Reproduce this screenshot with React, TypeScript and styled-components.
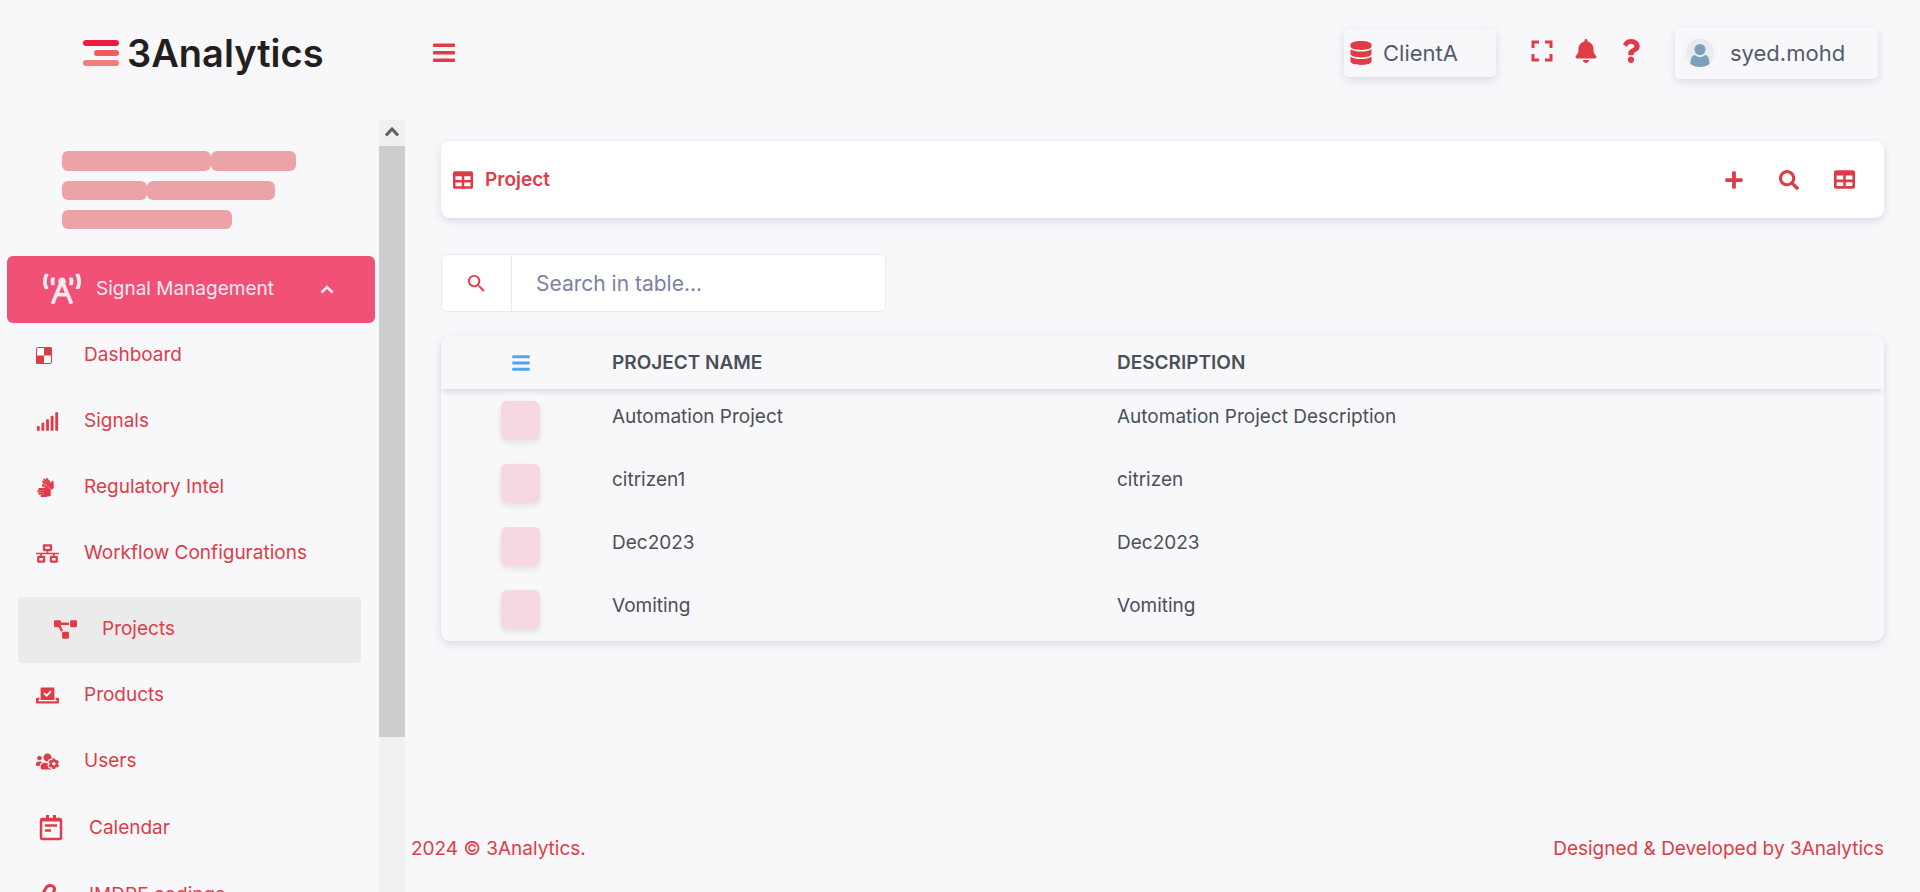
import React from 'react';
import styled, { createGlobalStyle } from 'styled-components';
import {
  FaBars, FaBell, FaBroadcastTower, FaDatabase, FaNetworkWired, FaPlus, FaProjectDiagram,
  FaQuestion, FaSearch, FaSignal, FaSignLanguage, FaTable, FaUsersCog, FaVoteYea,
} from 'react-icons/fa';
import { MdSearch } from 'react-icons/md';

const red = '#df3c47';
const shadow = '0 3px 8px rgba(30, 32, 70, 0.14)';

const GlobalStyle = createGlobalStyle`
  *, *::before, *::after { box-sizing: border-box; }
  body {
    margin: 0;
    background: #f8f8fb;
    color: #495057;
    font-family: Inter, Roboto, sans-serif;
    font-size: 19px;
    line-height: 28px;
    overflow: hidden;
  }
  button, input { font: inherit; color: inherit; }
  button { border: 0; background: none; padding: 0; cursor: pointer; }
  a { color: inherit; text-decoration: none; }
  svg { display: block; flex: none; }
`;

const Page = styled.div`
  display: flex;
  flex-direction: column;
  height: 100vh;
`;

const Header = styled.header`
  display: flex;
  align-items: center;
  flex: none;
  height: 106px;
  margin-bottom: 14px;
  padding: 0 42px 0 82px;
`;

const Brand = styled.a`
  display: flex;
  align-items: center;
  gap: 8px;
  width: 351px;
  color: #231f20;
  font-size: 38px;
  font-weight: 600;
  line-height: 48px;
`;

const IconButton = styled.button`
  display: flex;
  align-items: center;
  justify-content: center;
  color: ${red};
`;

const HeaderTools = styled.div`
  display: flex;
  align-items: center;
  margin-left: auto;
`;

const HeaderIcons = styled.div`
  display: flex;
  align-items: center;
  gap: 21px;
  padding: 0 32px 4px 35px;
`;

const HeaderChip = styled.button<{ $width: number; $height: number; $gap: number }>`
  display: flex;
  align-items: center;
  gap: ${(p) => p.$gap}px;
  width: ${(p) => p.$width}px;
  height: ${(p) => p.$height}px;
  padding: 0 5px;
  border-radius: 5px;
  background: #f8f8fb;
  box-shadow: ${shadow};
  color: #555b6d;
  font-size: 22px;
  svg { color: ${red}; }
`;

const Body = styled.div`
  display: flex;
  flex: 1;
  min-height: 0;
`;

const Sidebar = styled.aside`
  display: flex;
  flex: none;
  width: 405px;
`;

const SidebarScroll = styled.div`
  flex: 1;
  overflow: hidden;
  padding: 31px 4px 0 7px;
`;

const Skeleton = styled.div`
  display: flex;
  flex-direction: column;
  gap: 10px;
  margin: 0 0 27px 55px;
`;

const SkeletonLine = styled.div`
  display: flex;
  height: 19px;
  &:first-child { height: 20px; }
`;

const SkeletonBar = styled.span<{ $width: number }>`
  width: ${(p) => p.$width}px;
  border-radius: 6px;
  background: #eca3a8;
`;

const NavGroup = styled.button`
  display: flex;
  align-items: center;
  width: 100%;
  height: 67px;
  padding: 0 41px 2px 36px;
  border-radius: 6px;
  background: #f15176;
  color: #fbe9ef;
  span { margin-left: 15px; }
  svg:last-child { margin-left: auto; }
`;

const NavList = styled.ul`
  margin: 0;
  padding: 0;
  list-style: none;
`;

const NavLink = styled.a<{ $active?: boolean; $large?: boolean }>`
  display: flex;
  align-items: center;
  height: ${(p) => (p.$large ? 67 : 66)}px;
  margin: ${(p) => (p.$active ? '10px 14px 0 11px' : '0')};
  padding: 0 0 2px ${(p) => (p.$active ? 36 : p.$large ? 32 : 29)}px;
  border-radius: 4px;
  background: ${(p) => (p.$active ? '#ebebeb' : 'transparent')};
  color: ${red};
`;

const NavIcon = styled.span<{ $large?: boolean }>`
  display: flex;
  align-items: center;
  width: ${(p) => (p.$large ? 50 : 48)}px;
`;

const Scrollbar = styled.div`
  display: flex;
  flex-direction: column;
  width: 26px;
  background: #f0f0f0;
`;

const ScrollButton = styled.button`
  display: flex;
  align-items: center;
  justify-content: center;
  height: 26px;
`;

const ScrollThumb = styled.div`
  height: 591px;
  background: #cdcdcd;
`;

const Main = styled.main`
  display: flex;
  flex: 1;
  flex-direction: column;
  min-width: 0;
`;

const Content = styled.div`
  flex: 1;
  padding: 21px 36px 0;
`;

const TitleCard = styled.section`
  display: flex;
  align-items: center;
  height: 77px;
  padding: 0 29px 0 12px;
  border-radius: 9px;
  background: #fff;
  box-shadow: ${shadow};
  color: ${red};
`;

const Title = styled.h1`
  margin: 0 auto 0 12px;
  font-size: 19px;
  font-weight: 600;
`;

const Actions = styled.div`
  display: flex;
  gap: 35px;
`;

const SearchBox = styled.label`
  display: flex;
  width: 445px;
  height: 58px;
  margin: 36px 0 24px;
  overflow: hidden;
  border: 1px solid #e6e8f3;
  border-radius: 6px;
  background: #fff;
`;

const SearchIcon = styled.span`
  display: flex;
  align-items: center;
  justify-content: center;
  width: 70px;
  border-right: 1px solid #e6e8f3;
  color: ${red};
`;

const SearchInput = styled.input`
  flex: 1;
  min-width: 0;
  border: 0;
  outline: 0;
  padding: 2px 24px 0;
  font-size: 21px;
  &::placeholder { color: #7c829f; opacity: 1; }
`;

const TableCard = styled.section`
  border-radius: 9px;
  box-shadow: ${shadow};
`;

const Table = styled.table`
  width: 100%;
  table-layout: fixed;
  border-collapse: collapse;
  thead { box-shadow: 0 5px 5px -2px rgba(30, 32, 70, 0.14); }
  th, td { padding: 0 12px; text-align: left; }
  th { height: 53px; font-weight: 600; }
  td { height: 63px; padding-bottom: 8px; }
  th:first-child, td:first-child { width: 159px; padding-left: 60px; }
  td:first-child { padding-bottom: 0; }
  th:nth-child(2) { width: 505px; }
  th svg { margin-left: 10px; color: #50a5f1; }
`;

const RowAction = styled.button`
  display: block;
  width: 39px;
  height: 39px;
  border-radius: 6px;
  background: #f6d8e2;
  box-shadow: 0 3px 6px rgba(0, 0, 0, 0.09);
`;

const Footer = styled.footer`
  display: flex;
  align-items: center;
  justify-content: space-between;
  height: 60px;
  margin-bottom: 13px;
  padding: 0 36px 0 6px;
  color: ${red};
`;

const LogoMark = () => (
  <svg width="37" height="28" viewBox="0 0 37 28">
    <rect x="1" y="1" width="36" height="6" rx="3" fill="#ef1941" />
    <rect x="12" y="11" width="25" height="6" rx="3" fill="#f25c5e" />
    <rect x="1" y="21" width="36" height="6" rx="3" fill="#f47c7c" />
  </svg>
);

const MenuIcon = () => (
  <svg width="22" height="20" viewBox="0 0 22 20" fill={red}>
    <rect y=".5" width="22" height="3.500" rx="1" />
    <rect y="8" width="22" height="3.500" rx="1" />
    <rect y="15.500" width="22" height="3.500" rx="1" />
  </svg>
);

const FullScreenIcon = () => (
  <svg width="22" height="22" viewBox="0 0 22 22" fill="none" stroke="currentColor" strokeWidth="3">
    <path d="M2 8V2h6M14 2h6v6M20 14v6h-6M8 20H2v-6" />
  </svg>
);

const Avatar = () => (
  <svg width="38" height="38" viewBox="0 0 38 38">
    <circle cx="19" cy="19" r="18" fill="#f6f6f6" />
    <circle cx="20" cy="19" r="14" fill="#e6ecf3" />
    <circle cx="20" cy="15.500" r="5.500" fill="#7d9fb8" />
    <path d="M10.500 30c0-6 2-9 4.500-9 1.500 1.500 3 2 5 2s3.500-.5 5-2c2.500 0 4.500 3 4.500 9-2.500 2-6 3-9.500 3s-7-1-9.500-3z" fill="#7d9fb8" />
  </svg>
);

const DashboardIcon = () => (
  <svg width="16" height="17" viewBox="0 0 16 17">
    <rect x=".5" y=".5" width="15" height="16" rx="1.500" fill="#fff" stroke={red} />
    <path d="M8 0h6.500A1.500 1.500 0 0 1 16 1.500V8.500H8zM0 8.500h8V17H1.500A1.500 1.500 0 0 1 0 15.500z" fill={red} />
  </svg>
);

const CalendarIcon = () => (
  <svg width="24" height="26" viewBox="0 0 24 26" fill="none" stroke={red}>
    <rect x="2" y="4" width="20" height="20" rx="1.500" strokeWidth="2.500" />
    <path d="M2 5h20M8.500 0v5M15.500 0v5" strokeWidth="3" />
    <path d="M6 10.500h12M6 15.500h6" strokeWidth="2.500" />
  </svg>
);

const PencilIcon = () => (
  <svg width="24" height="24" viewBox="0 0 24 24" fill="none" stroke={red} strokeWidth="3">
    <path d="M3 12l4-7c2.500-4 9-3 8.500 2L9 20" />
  </svg>
);

const ChevronUp = () => (
  <svg width="14" height="14" viewBox="0 0 14 14" fill="none" stroke="currentColor" strokeWidth="2.500">
    <path d="M1.500 10.500L7 5l5.500 5.500" />
  </svg>
);

const ScrollArrow = () => (
  <svg width="14" height="12" viewBox="0 0 14 12" fill="none" stroke="#606060" strokeWidth="3">
    <path d="M1 8.500L7 2l6 6.500" />
  </svg>
);

const skeletonLines = [[149, 85], [85, 128], [170]];

const links = [
  { label: 'Dashboard', icon: <DashboardIcon /> },
  { label: 'Signals', icon: <FaSignal size={23} /> },
  { label: 'Regulatory Intel', icon: <FaSignLanguage size={19} /> },
  { label: 'Workflow Configurations', icon: <FaNetworkWired size={23} /> },
  { label: 'Projects', icon: <FaProjectDiagram size={23} />, active: true },
  { label: 'Products', icon: <FaVoteYea size={23} /> },
  { label: 'Users', icon: <FaUsersCog size={23} /> },
  { label: 'Calendar', icon: <CalendarIcon />, large: true },
  { label: 'IMDRF codings', icon: <PencilIcon />, large: true },
];

const projects = [
  { name: 'Automation Project', description: 'Automation Project Description' },
  { name: 'citrizen1', description: 'citrizen' },
  { name: 'Dec2023', description: 'Dec2023' },
  { name: 'Vomiting', description: 'Vomiting' },
];

export default function App() {
  return (
    <Page>
      <GlobalStyle />
      <Header>
        <Brand href="#"><LogoMark />3Analytics</Brand>
        <IconButton aria-label="Toggle menu"><MenuIcon /></IconButton>
        <HeaderTools>
          <HeaderChip $width={152} $height={48} $gap={10}><FaDatabase size={24} />ClientA</HeaderChip>
          <HeaderIcons>
            <IconButton aria-label="Full screen"><FullScreenIcon /></IconButton>
            <IconButton aria-label="Notifications"><FaBell size={24} /></IconButton>
            <IconButton aria-label="Help"><FaQuestion size={24} /></IconButton>
          </HeaderIcons>
          <HeaderChip $width={203} $height={51} $gap={12}><Avatar />syed.mohd</HeaderChip>
        </HeaderTools>
      </Header>
      <Body>
        <Sidebar>
          <SidebarScroll>
            <Skeleton aria-hidden="true">
              {skeletonLines.map((bars, i) => (
                <SkeletonLine key={i}>
                  {bars.map((width, j) => <SkeletonBar key={j} $width={width} />)}
                </SkeletonLine>
              ))}
            </Skeleton>
            <nav>
              <NavGroup aria-expanded="true">
                <FaBroadcastTower size={38} />
                <span>Signal Management</span>
                <ChevronUp />
              </NavGroup>
              <NavList>
                {links.map((link) => (
                  <li key={link.label}>
                    <NavLink href="#" $active={link.active} $large={link.large}>
                      <NavIcon $large={link.large}>{link.icon}</NavIcon>
                      {link.label}
                    </NavLink>
                  </li>
                ))}
              </NavList>
            </nav>
          </SidebarScroll>
          <Scrollbar>
            <ScrollButton aria-label="Scroll up"><ScrollArrow /></ScrollButton>
            <ScrollThumb />
          </Scrollbar>
        </Sidebar>
        <Main>
          <Content>
            <TitleCard>
              <FaTable size={20} />
              <Title>Project</Title>
              <Actions>
                <IconButton aria-label="Add project"><FaPlus size={20} /></IconButton>
                <IconButton aria-label="Search"><FaSearch size={20} /></IconButton>
                <IconButton aria-label="Columns"><FaTable size={21} /></IconButton>
              </Actions>
            </TitleCard>
            <SearchBox>
              <SearchIcon><MdSearch size={23} /></SearchIcon>
              <SearchInput type="text" placeholder="Search in table..." aria-label="Search in table" />
            </SearchBox>
            <TableCard>
              <Table>
                <thead>
                  <tr>
                    <th aria-label="Actions"><FaBars size={20} /></th>
                    <th>PROJECT NAME</th>
                    <th>DESCRIPTION</th>
                  </tr>
                </thead>
                <tbody>
                  {projects.map((project) => (
                    <tr key={project.name}>
                      <td><RowAction aria-label={`Actions for ${project.name}`} /></td>
                      <td>{project.name}</td>
                      <td>{project.description}</td>
                    </tr>
                  ))}
                </tbody>
              </Table>
            </TableCard>
          </Content>
          <Footer>
            <span>2024 © 3Analytics.</span>
            <span>Designed &amp; Developed by 3Analytics</span>
          </Footer>
        </Main>
      </Body>
    </Page>
  );
}
